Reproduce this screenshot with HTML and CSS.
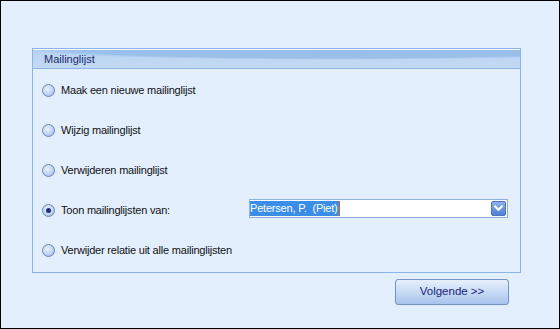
FILE: index.html
```html
<!DOCTYPE html>
<html>
<head>
<meta charset="utf-8">
<link rel="stylesheet" href="styles.css">
</head>
<body>
<div class="window">
  <div class="group">
    <div class="group-head">Mailinglijst</div>
    <div class="group-body">
      <div class="row"><span class="radio"></span><span class="label">Maak een nieuwe mailinglijst</span></div>
      <div class="row"><span class="radio"></span><span class="label">Wijzig mailinglijst</span></div>
      <div class="row"><span class="radio"></span><span class="label">Verwijderen mailinglijst</span></div>
      <div class="row"><span class="radio checked"></span><span class="label">Toon mailinglijsten van:</span>
        <div class="combo">
          <span class="combo-text"><span class="sel">Petersen, P.&nbsp; (Piet)</span><span class="caret"></span></span>
          <span class="combo-btn"><svg width="11" height="8" viewBox="0 0 11 8"><path d="M1.5 1.8 L5.5 5.8 L9.5 1.8" fill="none" stroke="#fff" stroke-width="2.2"/></svg></span>
        </div>
      </div>
      <div class="row"><span class="radio"></span><span class="label">Verwijder relatie uit alle mailinglijsten</span></div>
    </div>
  </div>
  <div class="footer">
    <button class="btn">Volgende &gt;&gt;</button>
  </div>
</div>
</body>
</html>
```

FILE: styles.css
```css
html, body {
  margin: 0;
  padding: 0;
}
body {
  width: 560px;
  height: 329px;
  font-family: "Liberation Sans", Arial, sans-serif;
  font-size: 11px;
  color: #111;
}
.window {
  box-sizing: border-box;
  width: 560px;
  height: 329px;
  border: 1px solid #000;
  background: #e3effd;
  padding: 47px 0 0 31px;
}
.group {
  box-sizing: border-box;
  width: 489px;
  height: 225px;
  border: 1px solid #8ab3e8;
  display: flex;
  flex-direction: column;
}
.group-head {
  box-sizing: border-box;
  height: 20px;
  border-top: 1px solid #f4f9ff;
  border-bottom: 1px solid #8ab3e8;
  padding-left: 11px;
  line-height: 18px;
  color: #1e2a6e;
  background:
    radial-gradient(ellipse 70% 60% at 62% 0%, #97bee9 0%, #99bfea 75%, rgba(153,191,234,0) 90%),
    linear-gradient(#b8d3f2, #c3daf4);
}
.group-body {
  padding: 1px 12px 0 9px;
  display: flex;
  flex-direction: column;
}
.row {
  height: 40px;
  display: flex;
  align-items: center;
}
.radio {
  box-sizing: border-box;
  width: 13px;
  height: 13px;
  border-radius: 50%;
  border: 1px solid #6683ba;
  background: radial-gradient(circle at 40% 35%, #e8f0fc 0%, #c4d7f2 50%, #98b5e3 100%);
  display: flex;
  align-items: center;
  justify-content: center;
  flex: none;
}
.radio.checked::after {
  content: "";
  width: 5px;
  height: 5px;
  border-radius: 50%;
  background: #1d2c7c;
}
.label {
  margin-left: 6px;
  letter-spacing: -0.2px;
}
.combo {
  box-sizing: border-box;
  margin-left: auto;
  margin-bottom: 4px;
  width: 259px;
  height: 19px;
  border: 1px solid #8fb0e2;
  background: #fff;
  display: flex;
  align-items: center;
  padding: 0 1px 0 0;
}
.combo-text {
  flex: 1;
  display: flex;
  align-items: center;
  height: 15px;
  font-family: "Liberation Sans", Arial, sans-serif;
  font-size: 11px;
  letter-spacing: -0.2px;
}
.sel {
  background: #3b8ee8;
  color: #fff;
  line-height: 15px;
  padding: 0 1px 0 0;
}
.caret {
  width: 1px;
  height: 15px;
  background: #c26a1c;
}
.combo-btn {
  box-sizing: border-box;
  width: 15px;
  height: 15px;
  border-radius: 2px;
  border: 1px solid #4d74c4;
  background: linear-gradient(#8fb2ec, #4f7ed6);
  display: flex;
  align-items: center;
  justify-content: center;
}
.footer {
  width: 489px;
  display: flex;
  justify-content: flex-end;
  padding-top: 6px;
}
.btn {
  box-sizing: border-box;
  width: 114px;
  height: 26px;
  margin-right: 12px;
  border: 1px solid #7492c6;
  border-radius: 3px;
  background: linear-gradient(#e6effc 0%, #c9dbf4 50%, #a7c3ec 100%);
  font-family: "Liberation Sans", Arial, sans-serif;
  font-size: 11.5px;
  color: #16237a;
  padding: 0 0 2px 0;
}
```
